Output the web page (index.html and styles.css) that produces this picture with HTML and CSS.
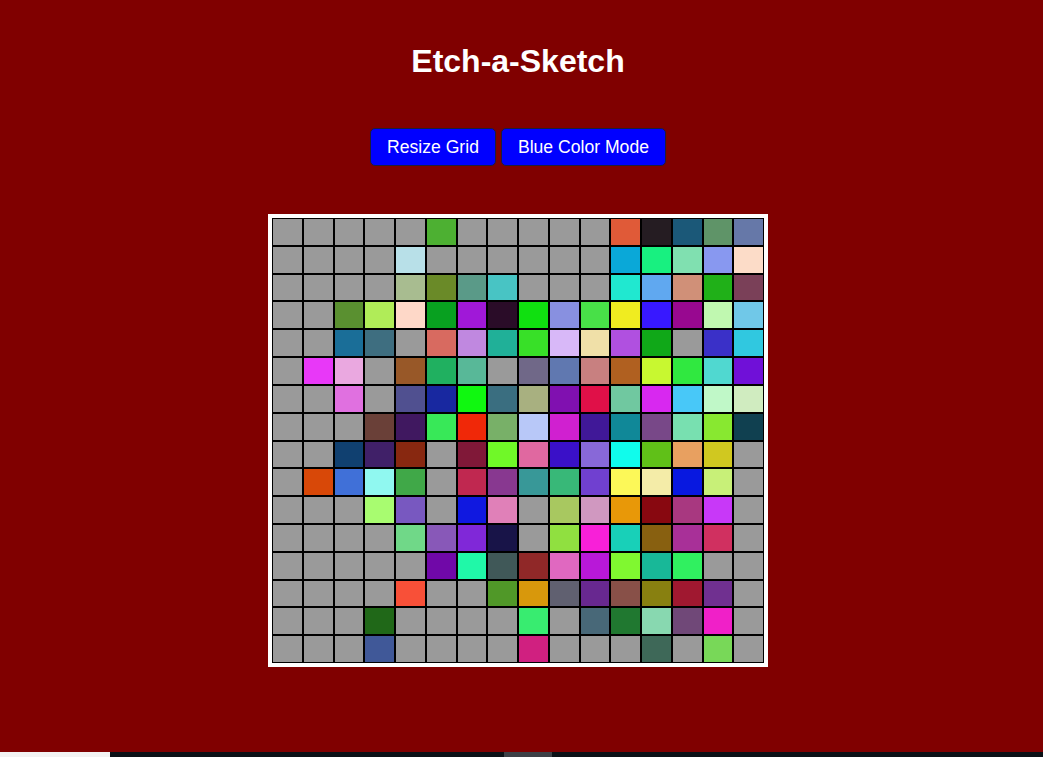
FILE: index.html
```html
<!DOCTYPE html>
<html lang="en">
<head>
<meta charset="utf-8">
<title>Etch-a-Sketch</title>
<link rel="stylesheet" href="styles.css">
</head>
<body>
<main class="app">
  <h1 class="title">Etch-a-Sketch</h1>
  <div class="controls">
    <button class="btn">Resize Grid</button>
    <button class="btn">Blue Color Mode</button>
  </div>
  <div class="board">
    <div class="grid">
      <!-- row 1 -->
      <div class="cell"></div><div class="cell"></div><div class="cell"></div><div class="cell"></div><div class="cell"></div><div class="cell" style="background:#4db032"></div><div class="cell"></div><div class="cell"></div><div class="cell"></div><div class="cell"></div><div class="cell"></div><div class="cell" style="background:#e05a38"></div><div class="cell" style="background:#251c22"></div><div class="cell" style="background:#1b5878"></div><div class="cell" style="background:#5f9468"></div><div class="cell" style="background:#6678a8"></div>
      <!-- row 2 -->
      <div class="cell"></div><div class="cell"></div><div class="cell"></div><div class="cell"></div><div class="cell" style="background:#b8e0e8"></div><div class="cell"></div><div class="cell"></div><div class="cell"></div><div class="cell"></div><div class="cell"></div><div class="cell"></div><div class="cell" style="background:#0aa8d8"></div><div class="cell" style="background:#18f080"></div><div class="cell" style="background:#80e0b0"></div><div class="cell" style="background:#8898f0"></div><div class="cell" style="background:#fcdcc8"></div>
      <!-- row 3 -->
      <div class="cell"></div><div class="cell"></div><div class="cell"></div><div class="cell"></div><div class="cell" style="background:#a8bc90"></div><div class="cell" style="background:#6a8a28"></div><div class="cell" style="background:#5a9a88"></div><div class="cell" style="background:#48c4c4"></div><div class="cell"></div><div class="cell"></div><div class="cell"></div><div class="cell" style="background:#20e8d0"></div><div class="cell" style="background:#60a8f0"></div><div class="cell" style="background:#d09078"></div><div class="cell" style="background:#20b018"></div><div class="cell" style="background:#7a4058"></div>
      <!-- row 4 -->
      <div class="cell"></div><div class="cell"></div><div class="cell" style="background:#5a9030"></div><div class="cell" style="background:#b0ec58"></div><div class="cell" style="background:#fed8c8"></div><div class="cell" style="background:#08a020"></div><div class="cell" style="background:#a018d8"></div><div class="cell" style="background:#2a0c28"></div><div class="cell" style="background:#10e010"></div><div class="cell" style="background:#8890e0"></div><div class="cell" style="background:#48e048"></div><div class="cell" style="background:#f0ec20"></div><div class="cell" style="background:#3818ff"></div><div class="cell" style="background:#980890"></div><div class="cell" style="background:#c0f8b0"></div><div class="cell" style="background:#70c8e8"></div>
      <!-- row 5 -->
      <div class="cell"></div><div class="cell"></div><div class="cell" style="background:#1a6e98"></div><div class="cell" style="background:#3e6e80"></div><div class="cell"></div><div class="cell" style="background:#d86a60"></div><div class="cell" style="background:#c088e0"></div><div class="cell" style="background:#20b098"></div><div class="cell" style="background:#38e028"></div><div class="cell" style="background:#d8b8f8"></div><div class="cell" style="background:#f0e0a8"></div><div class="cell" style="background:#b050e0"></div><div class="cell" style="background:#10a818"></div><div class="cell"></div><div class="cell" style="background:#3a30c8"></div><div class="cell" style="background:#30c8e0"></div>
      <!-- row 6 -->
      <div class="cell"></div><div class="cell" style="background:#e838f8"></div><div class="cell" style="background:#eaa8e0"></div><div class="cell"></div><div class="cell" style="background:#985828"></div><div class="cell" style="background:#20b060"></div><div class="cell" style="background:#58b898"></div><div class="cell"></div><div class="cell" style="background:#706888"></div><div class="cell" style="background:#6078b0"></div><div class="cell" style="background:#c88080"></div><div class="cell" style="background:#b06020"></div><div class="cell" style="background:#c8f830"></div><div class="cell" style="background:#30e840"></div><div class="cell" style="background:#50d8d0"></div><div class="cell" style="background:#7010d8"></div>
      <!-- row 7 -->
      <div class="cell"></div><div class="cell"></div><div class="cell" style="background:#e070e0"></div><div class="cell"></div><div class="cell" style="background:#505090"></div><div class="cell" style="background:#1828a0"></div><div class="cell" style="background:#10f810"></div><div class="cell" style="background:#3a6e80"></div><div class="cell" style="background:#a8b080"></div><div class="cell" style="background:#8010b0"></div><div class="cell" style="background:#e01048"></div><div class="cell" style="background:#70c8a0"></div><div class="cell" style="background:#d828f0"></div><div class="cell" style="background:#48c8f8"></div><div class="cell" style="background:#c0f8c8"></div><div class="cell" style="background:#d0ecc0"></div>
      <!-- row 8 -->
      <div class="cell"></div><div class="cell"></div><div class="cell"></div><div class="cell" style="background:#6a4038"></div><div class="cell" style="background:#401860"></div><div class="cell" style="background:#38e858"></div><div class="cell" style="background:#f02808"></div><div class="cell" style="background:#78b068"></div><div class="cell" style="background:#b8c8f8"></div><div class="cell" style="background:#d020d0"></div><div class="cell" style="background:#401898"></div><div class="cell" style="background:#108898"></div><div class="cell" style="background:#784888"></div><div class="cell" style="background:#78e0b0"></div><div class="cell" style="background:#88e830"></div><div class="cell" style="background:#104050"></div>
      <!-- row 9 -->
      <div class="cell"></div><div class="cell"></div><div class="cell" style="background:#104070"></div><div class="cell" style="background:#402068"></div><div class="cell" style="background:#882810"></div><div class="cell"></div><div class="cell" style="background:#801838"></div><div class="cell" style="background:#70f828"></div><div class="cell" style="background:#e068a0"></div><div class="cell" style="background:#3a10c8"></div><div class="cell" style="background:#8868d8"></div><div class="cell" style="background:#10fcec"></div><div class="cell" style="background:#60c018"></div><div class="cell" style="background:#e8a060"></div><div class="cell" style="background:#d0c820"></div><div class="cell"></div>
      <!-- row 10 -->
      <div class="cell"></div><div class="cell" style="background:#d84808"></div><div class="cell" style="background:#4070d8"></div><div class="cell" style="background:#90f8f0"></div><div class="cell" style="background:#40a848"></div><div class="cell"></div><div class="cell" style="background:#c02850"></div><div class="cell" style="background:#883890"></div><div class="cell" style="background:#389898"></div><div class="cell" style="background:#38b878"></div><div class="cell" style="background:#7040d0"></div><div class="cell" style="background:#fcf858"></div><div class="cell" style="background:#f4eca8"></div><div class="cell" style="background:#0818e0"></div><div class="cell" style="background:#c8f078"></div><div class="cell"></div>
      <!-- row 11 -->
      <div class="cell"></div><div class="cell"></div><div class="cell"></div><div class="cell" style="background:#a8fc70"></div><div class="cell" style="background:#7858c0"></div><div class="cell"></div><div class="cell" style="background:#1018e0"></div><div class="cell" style="background:#e080b8"></div><div class="cell"></div><div class="cell" style="background:#a8c860"></div><div class="cell" style="background:#d098c0"></div><div class="cell" style="background:#e89808"></div><div class="cell" style="background:#880810"></div><div class="cell" style="background:#a83880"></div><div class="cell" style="background:#c838f8"></div><div class="cell"></div>
      <!-- row 12 -->
      <div class="cell"></div><div class="cell"></div><div class="cell"></div><div class="cell"></div><div class="cell" style="background:#70d888"></div><div class="cell" style="background:#8858b8"></div><div class="cell" style="background:#8028d8"></div><div class="cell" style="background:#181448"></div><div class="cell"></div><div class="cell" style="background:#90e040"></div><div class="cell" style="background:#f820d8"></div><div class="cell" style="background:#18d0b8"></div><div class="cell" style="background:#886010"></div><div class="cell" style="background:#a83098"></div><div class="cell" style="background:#d03060"></div><div class="cell"></div>
      <!-- row 13 -->
      <div class="cell"></div><div class="cell"></div><div class="cell"></div><div class="cell"></div><div class="cell"></div><div class="cell" style="background:#7008a8"></div><div class="cell" style="background:#20f8a8"></div><div class="cell" style="background:#405858"></div><div class="cell" style="background:#902828"></div><div class="cell" style="background:#e068c0"></div><div class="cell" style="background:#b818d8"></div><div class="cell" style="background:#80f830"></div><div class="cell" style="background:#18b898"></div><div class="cell" style="background:#30f060"></div><div class="cell"></div><div class="cell"></div>
      <!-- row 14 -->
      <div class="cell"></div><div class="cell"></div><div class="cell"></div><div class="cell"></div><div class="cell" style="background:#f85038"></div><div class="cell"></div><div class="cell"></div><div class="cell" style="background:#509828"></div><div class="cell" style="background:#d8980c"></div><div class="cell" style="background:#606070"></div><div class="cell" style="background:#682890"></div><div class="cell" style="background:#885048"></div><div class="cell" style="background:#888010"></div><div class="cell" style="background:#a01830"></div><div class="cell" style="background:#703090"></div><div class="cell"></div>
      <!-- row 15 -->
      <div class="cell"></div><div class="cell"></div><div class="cell"></div><div class="cell" style="background:#206818"></div><div class="cell"></div><div class="cell"></div><div class="cell"></div><div class="cell"></div><div class="cell" style="background:#38ec70"></div><div class="cell"></div><div class="cell" style="background:#486878"></div><div class="cell" style="background:#207830"></div><div class="cell" style="background:#88d8b0"></div><div class="cell" style="background:#704878"></div><div class="cell" style="background:#f020c8"></div><div class="cell"></div>
      <!-- row 16 -->
      <div class="cell"></div><div class="cell"></div><div class="cell"></div><div class="cell" style="background:#405898"></div><div class="cell"></div><div class="cell"></div><div class="cell"></div><div class="cell"></div><div class="cell" style="background:#d02080"></div><div class="cell"></div><div class="cell"></div><div class="cell"></div><div class="cell" style="background:#3e6858"></div><div class="cell"></div><div class="cell" style="background:#78d858"></div><div class="cell"></div>
    </div>
  </div>
</main>
<div class="bottom-bar">
  <div class="bar-light"></div>
  <div class="bar-dark"><div class="bar-thumb"></div></div>
</div>
</body>
</html>
```

FILE: styles.css
```css
html, body {
  margin: 0;
  padding: 0;
}

body {
  background: #800000;
  font-family: "Liberation Sans", Arial, sans-serif;
  min-height: 757px;
}

.app {
  width: 1036px;
  padding-top: 43px;
  display: flex;
  flex-direction: column;
  align-items: center;
}

.title {
  margin: 0 0 48px;
  font-size: 32px;
  line-height: 37px;
  font-weight: bold;
  color: #ffffff;
}

.controls {
  display: flex;
  gap: 5px;
  justify-content: center;
  margin-bottom: 48px;
}

.btn {
  font-family: "Liberation Sans", Arial, sans-serif;
  font-size: 17.6px;
  line-height: 20px;
  color: #ffffff;
  background: #0000ff;
  border: 1px solid #1e1e3a;
  border-radius: 5px;
  padding: 8px 16px;
  margin: 0;
}

.board {
  background: #ffffff;
  padding: 4px;
}

.grid {
  width: 492px;
  height: 445px;
  display: grid;
  grid-template-columns: repeat(16, 1fr);
  grid-template-rows: repeat(16, 1fr);
}

.cell {
  box-sizing: border-box;
  border: 1px solid #000000;
  background: #9a9a9a;
}

.bottom-bar {
  position: fixed;
  left: 0;
  right: 0;
  bottom: 0;
  height: 5px;
  display: flex;
}

.bar-light {
  width: 110px;
  background: #f2f2f2;
}

.bar-dark {
  flex: 1;
  background: #0b1116;
  padding-left: 394px;
}

.bar-thumb {
  width: 48px;
  height: 100%;
  background: #3c4046;
}
```
